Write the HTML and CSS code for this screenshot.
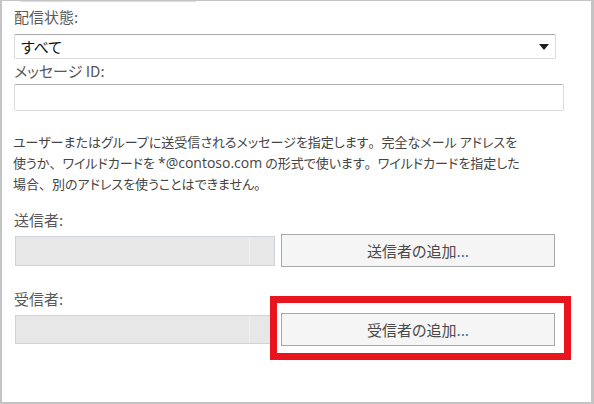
FILE: index.html
```html
<!DOCTYPE html>
<html lang="ja">
<head>
<meta charset="utf-8">
<link rel="stylesheet" href="styles.css">
</head>
<body>
<div class="frame">
  <div class="scrolled-field"></div>
  <div class="content">
    <div class="label label-first">配信状態:</div>
    <div class="select"><span class="select-value">すべて</span><span class="arrow"></span></div>
    <div class="label label-id">メッセージ ID:</div>
    <div class="textbox"></div>
    <p class="desc">ユーザーまたはグループに送受信されるメッセージを指定します<span class="punct">。</span>完全なメール アドレスを<br>使うか<span class="punct">、</span>ワイルドカードを <span class="latin">*@contoso.com</span> の形式で使います<span class="punct">。</span>ワイルドカードを指定した<br>場合<span class="punct">、</span>別のアドレスを使うことはできません<span class="punct">。</span></p>
    <div class="label label-sender">送信者:</div>
    <div class="row row-sender">
      <div class="picked"></div>
      <button class="btn">送信者の追加<span class="dots">...</span></button>
    </div>
    <div class="label label-recipient">受信者:</div>
    <div class="row row-recipient">
      <div class="picked"></div>
      <button class="btn">受信者の追加<span class="dots">...</span></button>
      <div class="highlight"></div>
    </div>
  </div>
</div>
</body>
</html>
```

FILE: styles.css
```css
* { box-sizing: border-box; }
html, body { margin: 0; padding: 0; background: #ffffff; }
body {
  width: 594px;
  height: 404px;
  font-family: "Noto Sans CJK JP", "Noto Sans", sans-serif;
  font-feature-settings: "palt";
  color: #444;
}
.frame {
  position: relative;
  width: 594px;
  height: 404px;
  border-style: solid;
  border-color: #c4c4c4;
  border-width: 1px 3px 2px 2px;
  background: #fff;
  overflow: hidden;
}
.scrolled-field {
  margin-left: 18px;
  width: 176px;
  height: 1px;
  background: #dcdcdc;
}
.content {
  padding: 0 0 0 12px;
  display: flex;
  flex-direction: column;
}
.label {
  font-size: 15px;
  line-height: 20px;
  color: #595959;
  height: 20px;
}
.label-first { margin-top: 5px; }
.select {
  margin-top: 7px;
  width: 542px;
  height: 25px;
  border: 1px solid #dcdcdc;
  border-top-color: #a9a9a9;
  border-radius: 2px;
  display: flex;
  align-items: center;
  justify-content: space-between;
  padding: 0 6px 0 6px;
}
.select-value {
  font-size: 15px;
  color: #111;
  line-height: 20px;
}
.arrow {
  width: 0;
  height: 0;
  border-left: 5px solid transparent;
  border-right: 5px solid transparent;
  border-top: 6px solid #1a1a1a;
}
.label-id { margin-top: 2px; }
.textbox {
  margin-top: 3px;
  width: 550px;
  height: 27px;
  border: 1px solid #dcdcdc;
  border-top-color: #b0b0b0;
  border-radius: 2px;
}
.desc {
  margin: 20px 0 0 -1px;
  font-size: 13px;
  line-height: 21px;
  color: #444;
  white-space: nowrap;
}
.punct { font-feature-settings: normal; }
.latin {
  font-family: "Open Sans", "Noto Sans", sans-serif;
  font-size: 14px;
}
.label-sender { margin-top: 16px; }
.row {
  display: flex;
  align-items: center;
  position: relative;
}
.row-sender { margin-top: 4px; height: 33px; }
.picked {
  width: 260px;
  height: 30px;
  margin-left: 1px;
  border: 1px solid #cfd4d8;
  background: linear-gradient(to right, #e7e7e7 233px, #f0f0f0 233px, #f0f0f0 234px, #e7e7e7 234px);
}
.row-recipient .picked { width: 256px; height: 29px; }
.btn {
  margin-left: 6px;
  width: 274px;
  height: 33px;
  border: 1px solid #a5a9ab;
  background: #f5f5f5;
  font-family: "Noto Sans CJK JP", "Noto Sans", sans-serif;
  font-feature-settings: "palt";
  font-size: 15px;
  color: #4a4a4a;
  padding: 0;
  display: flex;
  align-items: center;
  justify-content: center;
}
.row-recipient .btn { margin-left: 10px; }
.dots { color: #3a6ea5; }
.label-recipient { margin-top: 22px; }
.row-recipient { margin-top: 4px; height: 33px; }
.highlight {
  position: absolute;
  left: 256px;
  top: -17px;
  width: 301px;
  height: 64px;
  border: 7px solid #e8141e;
  pointer-events: none;
}
```
